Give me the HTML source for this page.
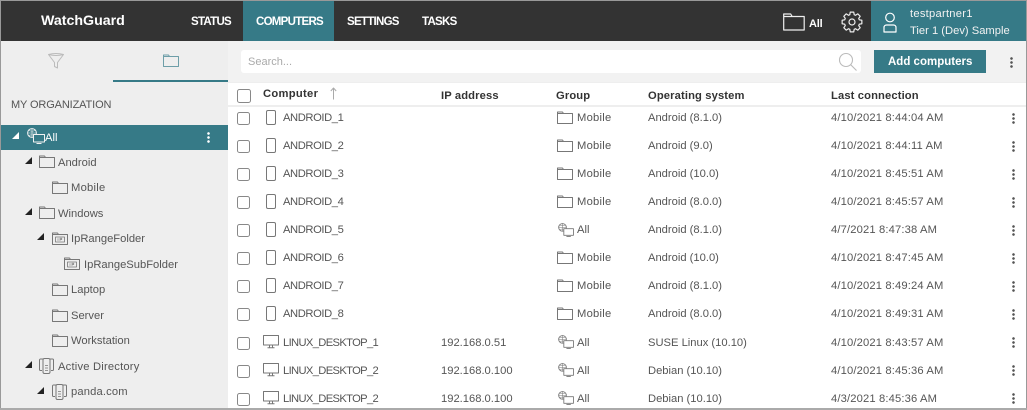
<!DOCTYPE html>
<html><head><meta charset="utf-8"><style>
html,body{margin:0;padding:0;background:#fff}
#p{position:relative;width:1027px;height:410px;overflow:hidden;background:#fff;font-family:"Liberation Sans",sans-serif;font-size:11.2px;color:#555}
#p div,#p svg{position:absolute}
.t{white-space:nowrap;line-height:14px;height:14px;margin-top:1px}
.b{font-weight:bold;color:#333;letter-spacing:.13px}
.n{color:#fff;font-weight:bold;font-size:11.5px;letter-spacing:-.72px}
.a{letter-spacing:-.4px}
.l{letter-spacing:-.65px}
.m{letter-spacing:.25px}
.o{letter-spacing:.15px}
.c{width:11px;height:11px;border:1px solid #888;border-radius:2.5px;background:#fff}
.d{width:3px;height:11px;background:radial-gradient(circle at 1.5px 1.5px,#555 1.1px,transparent 1.5px) 0 0/3px 4px repeat-y}
svg{fill:none;stroke:#777;stroke-width:1;stroke-linejoin:round}
</style></head><body><div id="p">
<svg width="0" height="0" style="left:0;top:0"><defs>
<symbol id="f" viewBox="0 0 16 13"><path d="M.5 12.500V1h5l1 1.500h9v10zM.5 2.500h6"/></symbol>
<symbol id="ip" viewBox="0 0 16 13"><path d="M.5 12.500V1h5l1 1.500h9v10zM.5 2.500h6"/><path d="M3.500 5h9v5h-9z" stroke-width=".8"/><path d="M6 6.200v2.700M8 8.900V6.200h1.800v1.400H8" stroke-width=".6"/></symbol>
<symbol id="all" viewBox="0 0 18 16"><circle cx="5" cy="5" r="4.400"/><path d="M.7 5h8.600M5 .7v8.600M2 2.500q3 1.300 6 0M2 7.500q3-1.300 6 0" stroke-width=".6"/><path d="M6.500 6.500h11v7.500h-11z" fill="var(--bg,#fff)"/><path d="M9.500 15.500h5"/></symbol>
<symbol id="ad" viewBox="0 0 15 16"><path d="M3 12.500H1.500a1 1 0 0 1-1-1V2a1 1 0 0 1 1-1H4M12 12.500h1.500a1 1 0 0 0 1-1V2a1 1 0 0 0-1-1H11"/><rect x="4" y=".5" width="7" height="15" rx="1.500"/><path d="M6 7.500h3M6 10h3M6 12.500h3" stroke-width=".8"/></symbol>
<symbol id="ph" viewBox="0 0 10 15"><rect x=".5" y=".5" width="9" height="14" rx="1.500"/></symbol>
<symbol id="pc" viewBox="0 0 16 14"><path d="M.5.5h15v9.500H.5zM6.500 10v2.500M9.500 10v2.500M4.500 12.800h7"/></symbol>
</defs></svg>

<div style="left:0;top:0;width:1027px;height:1px;background:#999"></div>
<div style="left:1px;top:1px;width:1026px;height:40px;background:#333"></div>
<div class="t" style="left:41px;top:13px;color:#fff;font-weight:bold;font-size:14.2px">WatchGuard</div>
<div style="left:243px;top:1px;width:91px;height:40px;background:#367a87"></div>
<div class="t n" style="left:191px;top:14px">STATUS</div>
<div class="t n" style="left:256px;top:14px">COMPUTERS</div>
<div class="t n" style="left:347px;top:14px">SETTINGS</div>
<div class="t n" style="left:422px;top:14px">TASKS</div>
<svg style="left:783px;top:13px;stroke:#eee;stroke-width:1.200" width="22" height="18" viewBox="0 0 22 18"><path d="M.7 17V1h7l1.500 2.500h12V17zM.7 3.500h8.500"/></svg>
<div class="t" style="left:809px;top:16px;color:#fff;font-size:11px;font-weight:bold;letter-spacing:-.2px">All</div>
<svg style="left:840.500px;top:11px;stroke:#eee;stroke-width:1.200" width="22" height="22" viewBox="-11 -11 22 22"><circle r="3"/><path d="M7.270-2.220L9.850-1.740 9.850 1.740 7.270 2.220 6.710 3.570 8.190 5.740 5.740 8.190 3.570 6.710 2.220 7.270 1.740 9.850-1.740 9.850-2.220 7.270-3.570 6.710-5.740 8.190-8.190 5.740-6.710 3.570-7.270 2.220-9.850 1.740-9.850-1.740-7.270-2.220-6.710-3.570-8.190-5.740-5.740-8.190-3.570-6.710-2.220-7.270-1.740-9.850 1.740-9.850 2.220-7.270 3.570-6.710 5.740-8.190 8.190-5.740 6.710-3.570z"/></svg>
<div style="left:871px;top:1px;width:155px;height:40px;background:#367a87"></div>
<svg style="left:882px;top:11px;stroke:#fff;stroke-width:1.200" width="16" height="22" viewBox="0 0 16 22"><circle cx="8" cy="6.500" r="4.300"/><path d="M2 21v-4.500a2.500 2.500 0 0 1 2.500-2.500h7a2.500 2.500 0 0 1 2.500 2.500V21z"/></svg>
<div class="t" style="left:910px;top:6px;color:#f2f2f2;letter-spacing:.25px">testpartner1</div>
<div class="t" style="left:910px;top:23px;color:#f2f2f2">Tier 1 (Dev) Sample</div>

<div style="left:0;top:1px;width:1px;height:409px;background:#999"></div>
<div style="left:1px;top:41px;width:227px;height:369px;background:#eee"></div>
<div style="left:228px;top:41px;width:798px;height:41px;background:#f2f2f2"></div>
<div style="left:113px;top:80px;width:115px;height:2px;background:#367a87"></div>
<svg style="left:48px;top:53px;stroke:#bbb" width="16" height="16" viewBox="0 0 16 16"><path d="M.5 1.500q7.500-2 15 0L9.500 9.500v5.500l-3-1.500V9.500zM.5 1.500q7.500 2 15 0"/></svg>
<svg style="left:163px;top:54px;stroke:#6d9ea8" width="16" height="13"><use href="#f"/></svg>
<div class="t" style="left:11px;top:97px;font-size:11px;letter-spacing:-.13px">MY ORGANIZATION</div>
<div style="left:1px;top:125px;width:227px;height:25px;background:#367a87"></div>
<div style="left:12px;top:132px;width:0;height:0;border-style:solid;border-width:0 0 7px 7px;border-color:transparent transparent #fff transparent"></div>
<svg style="left:27px;top:128px;stroke:#f2f2f2;--bg:#367a87" width="18" height="16"><use href="#all"/></svg>
<div class="t" style="left:45px;top:130px;color:#fff">All</div>
<div class="d" style="left:207px;top:132px;background-image:radial-gradient(circle at 1.500px 1.500px,#fff 1.100px,transparent 1.500px)"></div>

<div style="left:25px;top:157px;width:0;height:0;border-style:solid;border-width:0 0 7px 7px;border-color:transparent transparent #222 transparent"></div>
<svg style="left:39px;top:155px" width="16" height="13"><use href="#f"/></svg>
<div class="t" style="left:58px;top:155px">Android</div>
<svg style="left:52px;top:181px" width="16" height="13"><use href="#f"/></svg>
<div class="t m" style="left:71px;top:180px">Mobile</div>
<div style="left:25px;top:208px;width:0;height:0;border-style:solid;border-width:0 0 7px 7px;border-color:transparent transparent #222 transparent"></div>
<svg style="left:39px;top:206px" width="16" height="13"><use href="#f"/></svg>
<div class="t" style="left:58px;top:206px">Windows</div>
<div style="left:37px;top:233px;width:0;height:0;border-style:solid;border-width:0 0 7px 7px;border-color:transparent transparent #222 transparent"></div>
<svg style="left:52px;top:232px" width="16" height="13"><use href="#ip"/></svg>
<div class="t" style="left:71px;top:231px">IpRangeFolder</div>
<svg style="left:64px;top:257px" width="16" height="13"><use href="#ip"/></svg>
<div class="t" style="left:84px;top:257px">IpRangeSubFolder</div>
<svg style="left:52px;top:283px" width="16" height="13"><use href="#f"/></svg>
<div class="t" style="left:71px;top:282px">Laptop</div>
<svg style="left:52px;top:309px" width="16" height="13"><use href="#f"/></svg>
<div class="t" style="left:71px;top:308px">Server</div>
<svg style="left:52px;top:334px" width="16" height="13"><use href="#f"/></svg>
<div class="t" style="left:71px;top:333px">Workstation</div>
<div style="left:25px;top:361px;width:0;height:0;border-style:solid;border-width:0 0 7px 7px;border-color:transparent transparent #222 transparent"></div>
<svg style="left:39px;top:358px" width="15" height="16"><use href="#ad"/></svg>
<div class="t" style="left:58px;top:359px;letter-spacing:.2px">Active Directory</div>
<div style="left:37px;top:387px;width:0;height:0;border-style:solid;border-width:0 0 7px 7px;border-color:transparent transparent #222 transparent"></div>
<svg style="left:52px;top:384px" width="15" height="16"><use href="#ad"/></svg>
<div class="t o" style="left:71px;top:384px">panda.com</div>

<div style="left:241px;top:50px;width:620px;height:23px;background:#fff;border-radius:3px"></div>
<div class="t" style="left:248px;top:54px;color:#aaa;font-size:11px">Search...</div>
<svg style="left:838px;top:52px;stroke:#bbb;stroke-width:1.100" width="20" height="19"><circle cx="8" cy="8" r="6.500"/><path d="M12.500 12.500l6 6"/></svg>
<div style="left:874px;top:50px;width:112px;height:23px;background:#367a87"></div>
<div class="t" style="left:888px;top:54px;color:#fff;font-weight:bold;font-size:11.500px">Add computers</div>
<div class="d" style="left:1010px;top:57px"></div>

<div style="left:228px;top:82px;width:798px;height:1px;background:#eee"></div>
<div style="left:228px;top:105px;width:798px;height:2px;background:#eee"></div>
<div class="c" style="left:237px;top:89px;width:12px;height:12px"></div>
<div class="t b" style="left:263px;top:86px;letter-spacing:.3px">Computer</div>
<svg style="left:329px;top:87px;stroke:#aaa" width="9" height="13"><path d="M4.500 12.500V1M1.800 4L4.500 1 7.200 4"/></svg>
<div class="t b" style="left:441px;top:88px">IP address</div>
<div class="t b" style="left:556px;top:88px">Group</div>
<div class="t b" style="left:648px;top:88px">Operating system</div>
<div class="t b" style="left:831px;top:88px">Last connection</div>

<div class="c" style="left:237px;top:112px"></div><svg style="left:266px;top:110px" width="10" height="15"><use href="#ph"/></svg><div class="t a" style="left:283px;top:110px">ANDROID_1</div><svg style="left:557px;top:111px" width="16" height="13"><use href="#f"/></svg><div class="t m" style="left:577px;top:110px">Mobile</div><div class="t" style="left:648px;top:110px">Android (8.1.0)</div><div class="t o" style="left:831px;top:110px">4/10/2021 8:44:04 AM</div><div class="d" style="left:1012px;top:113px"></div>
<div class="c" style="left:237px;top:140px"></div><svg style="left:266px;top:138px" width="10" height="15"><use href="#ph"/></svg><div class="t a" style="left:283px;top:138px">ANDROID_2</div><svg style="left:557px;top:139px" width="16" height="13"><use href="#f"/></svg><div class="t m" style="left:577px;top:138px">Mobile</div><div class="t" style="left:648px;top:138px">Android (9.0)</div><div class="t o" style="left:831px;top:138px">4/10/2021 8:44:11 AM</div><div class="d" style="left:1012px;top:141px"></div>
<div class="c" style="left:237px;top:168px"></div><svg style="left:266px;top:166px" width="10" height="15"><use href="#ph"/></svg><div class="t a" style="left:283px;top:166px">ANDROID_3</div><svg style="left:557px;top:167px" width="16" height="13"><use href="#f"/></svg><div class="t m" style="left:577px;top:166px">Mobile</div><div class="t" style="left:648px;top:166px">Android (10.0)</div><div class="t o" style="left:831px;top:166px">4/10/2021 8:45:51 AM</div><div class="d" style="left:1012px;top:169px"></div>
<div class="c" style="left:237px;top:196px"></div><svg style="left:266px;top:194px" width="10" height="15"><use href="#ph"/></svg><div class="t a" style="left:283px;top:194px">ANDROID_4</div><svg style="left:557px;top:195px" width="16" height="13"><use href="#f"/></svg><div class="t m" style="left:577px;top:194px">Mobile</div><div class="t" style="left:648px;top:194px">Android (8.0.0)</div><div class="t o" style="left:831px;top:194px">4/10/2021 8:45:57 AM</div><div class="d" style="left:1012px;top:197px"></div>
<div class="c" style="left:237px;top:224px"></div><svg style="left:266px;top:222px" width="10" height="15"><use href="#ph"/></svg><div class="t a" style="left:283px;top:222px">ANDROID_5</div><svg style="left:558px;top:223px" width="16" height="14"><use href="#all"/></svg><div class="t" style="left:577px;top:222px">All</div><div class="t" style="left:648px;top:222px">Android (8.1.0)</div><div class="t o" style="left:831px;top:222px">4/7/2021 8:47:38 AM</div><div class="d" style="left:1012px;top:225px"></div>
<div class="c" style="left:237px;top:252px"></div><svg style="left:266px;top:250px" width="10" height="15"><use href="#ph"/></svg><div class="t a" style="left:283px;top:250px">ANDROID_6</div><svg style="left:557px;top:251px" width="16" height="13"><use href="#f"/></svg><div class="t m" style="left:577px;top:250px">Mobile</div><div class="t" style="left:648px;top:250px">Android (10.0)</div><div class="t o" style="left:831px;top:250px">4/10/2021 8:47:45 AM</div><div class="d" style="left:1012px;top:253px"></div>
<div class="c" style="left:237px;top:280px"></div><svg style="left:266px;top:278px" width="10" height="15"><use href="#ph"/></svg><div class="t a" style="left:283px;top:278px">ANDROID_7</div><svg style="left:557px;top:279px" width="16" height="13"><use href="#f"/></svg><div class="t m" style="left:577px;top:278px">Mobile</div><div class="t" style="left:648px;top:278px">Android (8.1.0)</div><div class="t o" style="left:831px;top:278px">4/10/2021 8:49:24 AM</div><div class="d" style="left:1012px;top:281px"></div>
<div class="c" style="left:237px;top:308px"></div><svg style="left:266px;top:306px" width="10" height="15"><use href="#ph"/></svg><div class="t a" style="left:283px;top:306px">ANDROID_8</div><svg style="left:557px;top:307px" width="16" height="13"><use href="#f"/></svg><div class="t m" style="left:577px;top:306px">Mobile</div><div class="t" style="left:648px;top:306px">Android (8.0.0)</div><div class="t o" style="left:831px;top:306px">4/10/2021 8:49:31 AM</div><div class="d" style="left:1012px;top:309px"></div>
<div class="c" style="left:237px;top:337px"></div><svg style="left:263px;top:335px" width="16" height="14"><use href="#pc"/></svg><div class="t l" style="left:283px;top:335px">LINUX_DESKTOP_1</div><div class="t" style="left:441px;top:335px">192.168.0.51</div><svg style="left:558px;top:335px" width="16" height="14"><use href="#all"/></svg><div class="t" style="left:577px;top:335px">All</div><div class="t" style="left:648px;top:335px">SUSE Linux (10.10)</div><div class="t o" style="left:831px;top:335px">4/10/2021 8:43:57 AM</div><div class="d" style="left:1012px;top:337px"></div>
<div class="c" style="left:237px;top:365px"></div><svg style="left:263px;top:363px" width="16" height="14"><use href="#pc"/></svg><div class="t l" style="left:283px;top:363px">LINUX_DESKTOP_2</div><div class="t" style="left:441px;top:363px">192.168.0.100</div><svg style="left:558px;top:363px" width="16" height="14"><use href="#all"/></svg><div class="t" style="left:577px;top:363px">All</div><div class="t" style="left:648px;top:363px">Debian (10.10)</div><div class="t o" style="left:831px;top:363px">4/10/2021 8:45:36 AM</div><div class="d" style="left:1012px;top:365px"></div>
<div class="c" style="left:237px;top:393px"></div><svg style="left:263px;top:391px" width="16" height="14"><use href="#pc"/></svg><div class="t l" style="left:283px;top:391px">LINUX_DESKTOP_2</div><div class="t" style="left:441px;top:391px">192.168.0.100</div><svg style="left:558px;top:391px" width="16" height="14"><use href="#all"/></svg><div class="t" style="left:577px;top:391px">All</div><div class="t" style="left:648px;top:391px">Debian (10.10)</div><div class="t o" style="left:831px;top:391px">4/3/2021 8:45:36 AM</div><div class="d" style="left:1012px;top:393px"></div>

<div style="left:1026px;top:0;width:1px;height:410px;background:#999"></div>
<div style="left:0;top:408px;width:1027px;height:2px;background:#aaa"></div>
</div></body></html>
